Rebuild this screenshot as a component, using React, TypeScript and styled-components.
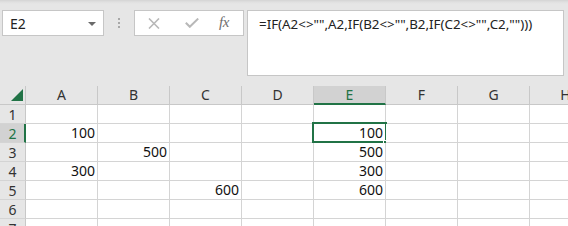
import { Fragment } from 'react';
import styled, { createGlobalStyle } from 'styled-components';

const GlobalStyle = createGlobalStyle`
  html, body {
    margin: 0;
    padding: 0;
    background: #e6e6e6;
    overflow: hidden;
  }
  body {
    font-family: "Noto Sans", "Liberation Sans", sans-serif;
  }
`;

const GREEN = '#217346';

const Window = styled.div`
  width: 568px;
  height: 226px;
  overflow: hidden;
  background: #e6e6e6;
`;

const FormulaBar = styled.div`
  height: 86px;
  box-sizing: border-box;
  padding: 10px 0 0 2px;
  display: flex;
  align-items: flex-start;
  background: linear-gradient(#d4d4d4 0px, #e0e0e0 2px, #e6e6e6 4px);
`;

const NameBox = styled.div`
  width: 102px;
  height: 26px;
  box-sizing: border-box;
  border: 1px solid #c6c6c6;
  background: #fff;
  display: flex;
  align-items: center;
  justify-content: space-between;
  padding: 0 7px 0 7px;
  font-size: 14px;
  color: #222;
`;

const Caret = styled.span`
  width: 0;
  height: 0;
  border-left: 4px solid transparent;
  border-right: 4px solid transparent;
  border-top: 4px solid #6a6a6a;
  margin-top: 1px;
`;

const Grip = styled.div`
  width: 30px;
  height: 26px;
  display: flex;
  flex-direction: column;
  align-items: center;
  justify-content: center;
  gap: 2px;
  span {
    width: 2px;
    height: 2px;
    background: #a8a8a8;
  }
`;

const FuncBox = styled.div`
  width: 110px;
  height: 26px;
  box-sizing: border-box;
  border: 1px solid #c6c6c6;
  background: #fff;
  display: flex;
  align-items: center;
  padding-left: 13px;
`;

const IconSlot = styled.div<{ $w: number }>`
  width: ${({ $w }) => $w}px;
  display: flex;
  align-items: center;
  justify-content: flex-start;
`;

const Fx = styled.span`
  font-family: "Liberation Serif", "DejaVu Serif", serif;
  font-style: italic;
  font-size: 15px;
  color: #6e6e6e;
  letter-spacing: -0.5px;
  margin-top: -2px;
`;

const FormulaInput = styled.div`
  margin-left: 3px;
  width: 317px;
  height: 66px;
  box-sizing: border-box;
  border: 1px solid #c6c6c6;
  background: #fff;
  padding: 4px 0 0 11px;
  font-size: 13.35px;
  line-height: 18px;
  color: #222;
  white-space: nowrap;
`;

const Sheet = styled.div`
  display: grid;
  grid-template-columns: 26px repeat(8, 72px);
  grid-auto-rows: 19px;
  width: 568px;
  overflow: hidden;
`;

const Corner = styled.div`
  background: #e6e6e6;
  border-right: 1px solid #c8c8c8;
  border-bottom: 1px solid #c8c8c8;
  box-sizing: border-box;
  display: flex;
  align-items: flex-end;
  justify-content: flex-end;
  padding: 0 2px 3px 0;
`;

const ColHeader = styled.div<{ $active?: boolean }>`
  box-sizing: border-box;
  background: ${({ $active }) => ($active ? '#d2d2d2' : '#e6e6e6')};
  border-right: 1px solid #c8c8c8;
  border-bottom: ${({ $active }) => ($active ? `2px solid ${GREEN}` : '1px solid #c8c8c8')};
  display: flex;
  align-items: center;
  justify-content: center;
  font-size: 14px;
  color: ${({ $active }) => ($active ? GREEN : '#333')};
  line-height: 1;
  padding-top: ${({ $active }) => ($active ? '1px' : '0')};
`;

const RowHeader = styled.div<{ $active?: boolean }>`
  box-sizing: border-box;
  background: ${({ $active }) => ($active ? '#d2d2d2' : '#e6e6e6')};
  border-right: ${({ $active }) => ($active ? `2px solid ${GREEN}` : '1px solid #c8c8c8')};
  border-bottom: 1px solid #d4d4d4;
  display: flex;
  align-items: center;
  justify-content: center;
  font-size: 14px;
  color: ${({ $active }) => ($active ? GREEN : '#333')};
  padding-left: ${({ $active }) => ($active ? '1px' : '0')};
`;

const Cell = styled.div`
  position: relative;
  box-sizing: border-box;
  background: #fff;
  border-right: 1px solid #d4d4d4;
  border-bottom: 1px solid #d4d4d4;
  font-size: 14px;
  color: #111;
  text-align: right;
  padding-right: 2px;
  line-height: 18px;
`;

const Selection = styled.div`
  position: absolute;
  left: -2px;
  top: -2px;
  width: 75px;
  height: 21px;
  box-sizing: border-box;
  border: 2px solid ${GREEN};
  pointer-events: none;
`;

const FillHandle = styled.div`
  position: absolute;
  left: 69px;
  top: 16px;
  width: 6px;
  height: 6px;
  box-sizing: border-box;
  background: ${GREEN};
  border-left: 1px solid #fff;
  border-top: 1px solid #fff;
`;

const cols = ['A', 'B', 'C', 'D', 'E', 'F', 'G', 'H'];
const rows = [1, 2, 3, 4, 5, 6, 7];

const data: Record<string, string> = {
  A2: '100',
  B3: '500',
  A4: '300',
  C5: '600',
  E2: '100',
  E3: '500',
  E4: '300',
  E5: '600',
};

export default function App() {
  return (
    <Window>
      <GlobalStyle />
      <FormulaBar>
        <NameBox>
          E2
          <Caret />
        </NameBox>
        <Grip>
          <span />
          <span />
          <span />
        </Grip>
        <FuncBox>
          <IconSlot $w={37}>
            <svg width="12" height="11" viewBox="0 0 12 11">
              <path d="M1 0.5 L11 10.5 M11 0.5 L1 10.5" stroke="#b8b8b8" strokeWidth="1.6" fill="none" />
            </svg>
          </IconSlot>
          <IconSlot $w={34}>
            <svg width="14" height="10" viewBox="0 0 14 10">
              <path d="M0.8 4.8 L4.8 8.8 L13.2 0.6" stroke="#b8b8b8" strokeWidth="2" fill="none" />
            </svg>
          </IconSlot>
          <IconSlot $w={20}>
            <Fx>fx</Fx>
          </IconSlot>
        </FuncBox>
        <FormulaInput>=IF(A2&lt;&gt;"",A2,IF(B2&lt;&gt;"",B2,IF(C2&lt;&gt;"",C2,"")))</FormulaInput>
      </FormulaBar>
      <Sheet>
        <Corner>
          <svg width="12" height="12" viewBox="0 0 12 12">
            <polygon points="12,0 12,12 0,12" fill={GREEN} />
          </svg>
        </Corner>
        {cols.map((c) => (
          <ColHeader key={c} $active={c === 'E'}>
            {c}
          </ColHeader>
        ))}
        {rows.map((r) => (
          <Fragment key={r}>
            <RowHeader $active={r === 2}>{r}</RowHeader>
            {cols.map((c) => (
              <Cell key={`${c}${r}`}>
                {data[`${c}${r}`]}
                {c === 'E' && r === 2 && (
                  <>
                    <Selection />
                    <FillHandle />
                  </>
                )}
              </Cell>
            ))}
          </Fragment>
        ))}
      </Sheet>
    </Window>
  );
}
